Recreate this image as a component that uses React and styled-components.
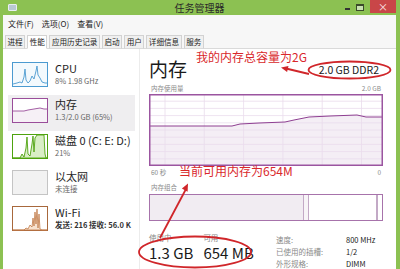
import React from 'react';
import styled, { createGlobalStyle } from 'styled-components';

const Global = createGlobalStyle`
  html, body { margin: 0; padding: 0; background: #fff; }
  body { font-family: "Noto Sans CJK SC", "Noto Sans", sans-serif; color: #222; }
`;

const tabs = ['进程', '性能', '应用历史记录', '启动', '用户', '详细信息', '服务'];

const devices = [
    { key: 'cpu', title: 'CPU', sub: '8% 1.98 GHz' },
    { key: 'mem', title: '内存', sub: '1.3/2.0 GB (65%)', active: true },
    { key: 'disk', title: '磁盘 0 (C: E: D:)', sub: '21%' },
    { key: 'eth', title: '以太网', sub: '未连接' },
    { key: 'wifi', title: 'Wi-Fi', sub: '发送: 216 接收: 56.0 K', strong: true },
];

const Thumb = ({ kind }) => {
    if (kind === 'cpu') {
        return (
            <svg width="36" height="25" viewBox="0 0 36 25">
                <rect x="0.5" y="0.5" width="35" height="24" fill="#f3f9fd" stroke="#4b9ad0" />
                <path d="M1,22 L5,21 L8,20 L10,21 L12,15 L13,7 L14,18 L16,21 L18,19 L20,14 L22,17 L24,9 L25,4 L26,13 L28,16 L30,20 L33,21 L35,21" fill="none" stroke="#4b9ad0" strokeWidth="0.9" />
            </svg>
        );
    }
    if (kind === 'mem') {
        return (
            <svg width="36" height="25" viewBox="0 0 36 25">
                <rect x="0.5" y="0.5" width="35" height="24" fill="#fff" stroke="#9a4d9a" />
                <path d="M1,13 L12,13 L16,12 L22,11 L28,10 L32,11 L35,11 L35,24 L1,24 Z" fill="#f6f0f6" />
                <path d="M1,13 L12,13 L16,12 L22,11 L28,10 L32,11 L35,11" fill="none" stroke="#9a4d9a" strokeWidth="0.9" />
            </svg>
        );
    }
    if (kind === 'disk') {
        return (
            <svg width="36" height="25" viewBox="0 0 36 25">
                <rect x="0.5" y="0.5" width="35" height="24" fill="#fff" stroke="#4ea30e" />
                <path d="M1,24 L8,24 L10,20 L12,23 L14,14 L15,3 L16,20 L18,22 L20,10 L21,2 L22,18 L23,4 L25,1 L32,1 L33,20 L34,24 L35,24 Z" fill="#d9eec6" stroke="#4ea30e" strokeWidth="0.9" />
            </svg>
        );
    }
    if (kind === 'wifi') {
        return (
            <svg width="36" height="25" viewBox="0 0 36 25">
                <rect x="0.5" y="0.5" width="35" height="24" fill="#fff" stroke="#a8683c" />
                <path d="M1,24 L12,24 L14,22 L16,23 L18,19 L20,21 L21,12 L22,20 L23,6 L24,18 L25,3 L26,22 L27,8 L28,23 L30,24 L35,24 Z" fill="#f7e2cf" stroke="#c07a48" strokeWidth="0.8" />
            </svg>
        );
    }
    return (
        <svg width="36" height="25" viewBox="0 0 36 25">
            <rect x="0.5" y="0.5" width="35" height="24" fill="#f2f2f2" stroke="#c4c4c4" />
        </svg>
    );
};

// usage chart: 6 columns, 10 rows, trace slowly rising over 60 s
const UsageChart = () => {
    const w = 234;
    const h = 72;
    const pts = [[0, 32], [83, 32], [91, 30], [110, 29], [136, 28], [145, 26], [160, 23], [181, 22], [208, 21], [217, 23], [234, 23]];
    const line = pts.map(([x, y], i) => `${i ? 'L' : 'M'}${x},${y}`).join(' ');
    return (
        <svg width={w} height={h} viewBox={`0 0 ${w} ${h}`}>
            <rect x="0" y="0" width={w} height={h} fill="#fff" />
            <path d={`${line} L${w},${h} L0,${h} Z`} fill="#f4eef5" />
            {Array.from({ length: 6 }, (_, i) => (
                <line key={`v${i}`} x1={16 + i * 39.3} y1="0" x2={16 + i * 39.3} y2={h} stroke="#eadcec" strokeWidth="0.8" />
            ))}
            {Array.from({ length: 9 }, (_, i) => (
                <line key={`h${i}`} x1="0" y1={(i + 1) * 7.2} x2={w} y2={(i + 1) * 7.2} stroke="#eadcec" strokeWidth="0.8" />
            ))}
            <path d={line} fill="none" stroke="#8e3f91" strokeWidth="1" />
            <rect x="0.75" y="0.75" width={w - 1.5} height={h - 1.5} fill="none" stroke="#9b55a0" strokeWidth="1.5" />
        </svg>
    );
};

const App = () => {
    return (
        <>
            <Global />
            <Window>
                <TitleBar>
                    <AppIcon />
                    <Title>任务管理器</Title>
                    <Controls>
                        <MinBar />
                        <MaxBox />
                        <Close>×</Close>
                    </Controls>
                </TitleBar>
                <Body>
                    <MenuBar>
                        <span>文件(F)</span>
                        <span>选项(O)</span>
                        <span>查看(V)</span>
                    </MenuBar>
                    <TabBar>
                        {tabs.map((t) => (
                            <Tab key={t} $active={t === '性能'}>{t}</Tab>
                        ))}
                    </TabBar>
                    <Content>
                        <Sidebar>
                            {devices.map((d) => (
                                <Item key={d.key} $active={d.active}>
                                    <Thumb kind={d.key} />
                                    <ItemText>
                                        <ItemTitle>{d.title}</ItemTitle>
                                        <ItemSub $strong={d.strong}>{d.sub}</ItemSub>
                                    </ItemText>
                                </Item>
                            ))}
                        </Sidebar>
                        <Main>
                            <Header>
                                <BigTitle>内存</BigTitle>
                                <Spec>2.0 GB DDR2</Spec>
                            </Header>
                            <Caption $top={2}>
                                <span>内存使用量</span>
                                <span>2.0 GB</span>
                            </Caption>
                            <UsageChart />
                            <Caption $top={1}>
                                <span>60 秒</span>
                                <span>0</span>
                            </Caption>
                            <Caption $top={4}>
                                <span>内存组合</span>
                            </Caption>
                            <Composition>
                                <Segment $w={153} $bg="#f1ecf2" />
                                <Segment $w={4} $bg="#f7f4f7" />
                                <Segment $grow $bg="#fff" />
                                <Segment $w={4} $bg="#fff" $left />
                            </Composition>
                            <Stats>
                                <StatGroup>
                                    <Stat>
                                        <StatLabel>使用中</StatLabel>
                                        <StatValue>1.3 GB</StatValue>
                                    </Stat>
                                    <Stat>
                                        <StatLabel>可用</StatLabel>
                                        <StatValue>654 MB</StatValue>
                                    </Stat>
                                </StatGroup>
                                <Specs>
                                    <dt>速度:</dt><dd>800 MHz</dd>
                                    <dt>已使用的插槽:</dt><dd>1/2</dd>
                                    <dt>外形规格:</dt><dd>DIMM</dd>
                                </Specs>
                            </Stats>
                        </Main>
                    </Content>
                </Body>

                <Note style={{ left: 196, top: 49 }}>我的内存总容量为2G</Note>
                <Note style={{ left: 179, top: 163 }}>当前可用内存为654M</Note>
                <Marks width="400" height="269" viewBox="0 0 400 269">
                    <ellipse cx="349.5" cy="70" rx="41" ry="8.5" />
                    <line x1="309" y1="74" x2="286" y2="68.5" />
                    <polygon points="281,67.5 288.5,66 287.1,72" />
                    <ellipse cx="195" cy="252" rx="56" ry="15.5" />
                    <line x1="160" y1="238" x2="186" y2="189" />
                    <polygon points="188,183.5 187.6,191.8 181.9,188.6" />
                </Marks>
            </Window>
        </>
    );
};

export default App;

const Window = styled.div`
    position: relative;
    width: 400px;
    height: 269px;
    overflow: hidden;
    box-sizing: border-box;
    padding: 0 4px 0 3px;
    background: #8cc152;
    display: flex;
    flex-direction: column;
`;

const TitleBar = styled.div`
    height: 15px;
    flex: none;
    display: grid;
    grid-template-columns: 1fr auto 1fr;
    align-items: center;
`;

const AppIcon = styled.div`
    width: 7px;
    height: 5px;
    margin-left: 5px;
    border: 1px solid #e8eef2;
    background: #b9c9d4;
    border-radius: 1px;
`;

const Title = styled.div`
    font-size: 10px;
    line-height: 15px;
    color: #2a2a2a;
`;

const Controls = styled.div`
    justify-self: end;
    display: flex;
    align-items: flex-start;
    height: 15px;
`;

const MinBar = styled.span`
    width: 5px;
    height: 1.5px;
    margin: 8px 6px 0 0;
    background: #333;
`;

const MaxBox = styled.span`
    width: 6px;
    height: 4px;
    margin: 4px 6px 0 0;
    border: 1px solid #3a4a2a;
    border-top-width: 2px;
    background: #c8e0b0;
`;

const Close = styled.span`
    width: 26px;
    height: 13px;
    background: #c94648;
    color: #fbe9e9;
    font-size: 10px;
    line-height: 13px;
    text-align: center;
`;

const Body = styled.div`
    flex: 1;
    min-height: 0;
    background: #fff;
    display: flex;
    flex-direction: column;
`;

const MenuBar = styled.div`
    height: 16px;
    flex: none;
    display: flex;
    gap: 8px;
    align-items: center;
    padding-left: 5px;
    background: #f7f7f7;
    font-size: 8px;
    color: #222;
`;

const TabBar = styled.div`
    height: 17px;
    flex: none;
    display: flex;
    align-items: flex-end;
    gap: 2px;
    padding-left: 2px;
    background: #f7f7f7;
    border-bottom: 1px solid #dadada;
`;

const Tab = styled.div`
    height: 14px;
    padding: 0 1.5px;
    margin-bottom: -1px;
    box-sizing: border-box;
    border: 1px solid #d2d2d2;
    border-bottom-color: ${(p) => (p.$active ? '#fff' : '#dadada')};
    background: ${(p) => (p.$active ? '#fff' : '#f0f0f0')};
    font-size: 7.6px;
    line-height: 12px;
    color: #222;
`;

const Content = styled.div`
    flex: 1;
    min-height: 0;
    display: flex;
`;

const Sidebar = styled.div`
    width: 136px;
    flex: none;
    padding-top: 10px;
    border-right: 1px solid #ececec;
`;

const Item = styled.div`
    height: 36px;
    box-sizing: border-box;
    margin: 0 4px 0 5px;
    padding: 3px 0 0 4px;
    display: flex;
    align-items: flex-start;
    gap: 7px;
    background: ${(p) => (p.$active ? '#efeef0' : 'transparent')};
    svg { flex: none; }
`;

const ItemText = styled.div`
    display: flex;
    flex-direction: column;
    white-space: nowrap;
`;

const ItemTitle = styled.div`
    font-size: 11px;
    line-height: 13px;
    color: #1e1e1e;
`;

const ItemSub = styled.div`
    font-size: 7.5px;
    line-height: 11px;
    color: ${(p) => (p.$strong ? '#333' : '#666')};
    font-weight: ${(p) => (p.$strong ? 600 : 400)};
`;

const Main = styled.div`
    flex: 1;
    min-width: 0;
    padding: 6px 13px 0 9px;
    display: flex;
    flex-direction: column;
    & > * { flex: none; }
`;

const Header = styled.div`
    display: flex;
    justify-content: space-between;
    align-items: flex-end;
    height: 26px;
`;

const BigTitle = styled.div`
    font-size: 19px;
    line-height: 24px;
    color: #1a1a1a;
`;

const Spec = styled.div`
    font-size: 10.5px;
    line-height: 14px;
    margin: 0 4px 4px 0;
    color: #1a1a1a;
`;

const Caption = styled.div`
    display: flex;
    justify-content: space-between;
    font-size: 6.5px;
    line-height: 10px;
    color: #8a8a8a;
    margin-top: ${(p) => p.$top || 0}px;
    margin-bottom: 1px;
    padding: 0 2px;
`;

const Composition = styled.div`
    height: 27px;
    box-sizing: border-box;
    border: 1px solid #a773ab;
    display: flex;
    margin-top: 1px;
`;

const Segment = styled.div`
    width: ${(p) => (p.$w ? `${p.$w}px` : 'auto')};
    flex: ${(p) => (p.$grow ? 1 : 'none')};
    background: ${(p) => p.$bg};
    border-right: ${(p) => (p.$left ? 'none' : '1px solid #c3a9c6')};
    border-left: ${(p) => (p.$left ? '1px solid #c3a9c6' : 'none')};
`;

const Stats = styled.div`
    display: flex;
    margin-top: 12px;
`;

const StatGroup = styled.div`
    width: 127px;
    display: flex;
    gap: 10px;
`;

const Stat = styled.div`
    display: flex;
    flex-direction: column;
    gap: 1px;
`;

const StatLabel = styled.div`
    font-size: 7.5px;
    line-height: 10px;
    color: #8a8a8a;
`;

const StatValue = styled.div`
    font-size: 15px;
    line-height: 17px;
    color: #1a1a1a;
    white-space: nowrap;
`;

const Specs = styled.dl`
    margin: 0;
    padding-top: 1px;
    display: grid;
    grid-template-columns: 70px auto;
    row-gap: 1px;
    font-size: 7.5px;
    line-height: 11px;
    dt { color: #8a8a8a; }
    dd { margin: 0; color: #1a1a1a; }
`;

const Note = styled.span`
    position: absolute;
    font-size: 12px;
    line-height: 15px;
    color: #d9282b;
    white-space: nowrap;
`;

const Marks = styled.svg`
    position: absolute;
    left: 0;
    top: 0;
    pointer-events: none;
    ellipse, line { fill: none; stroke: #d0262a; stroke-width: 1.8; }
    polygon { fill: #d0262a; }
`;
